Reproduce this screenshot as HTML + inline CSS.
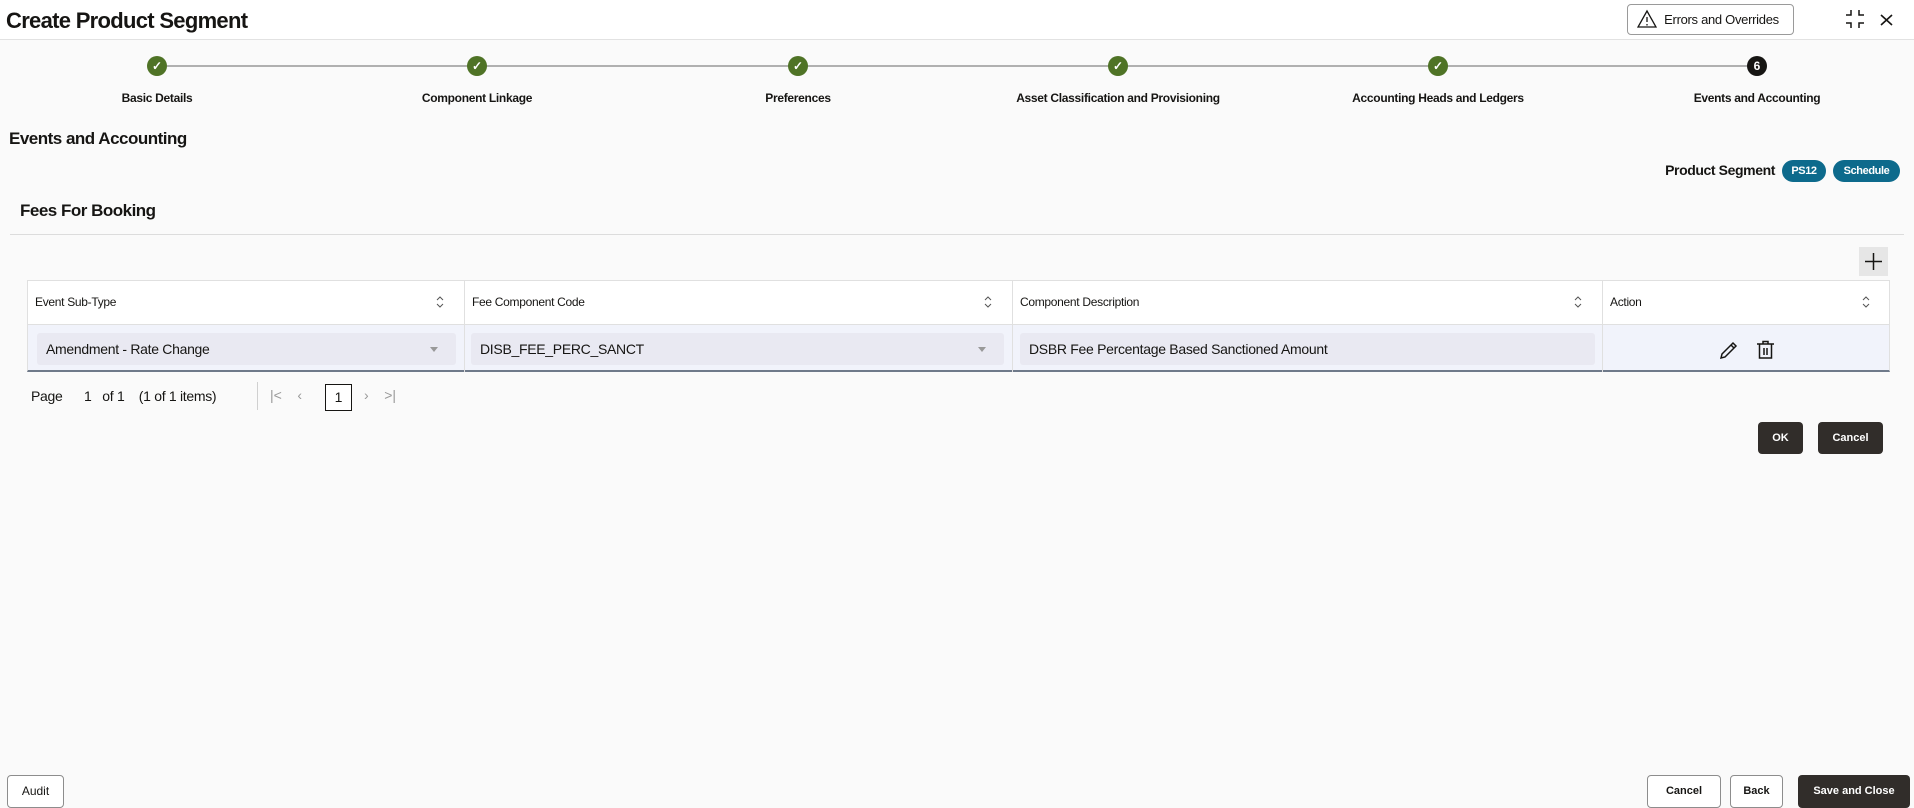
<!DOCTYPE html>
<html><head><meta charset="utf-8"><style>
*{box-sizing:border-box;margin:0;padding:0}
body{width:1914px;height:808px;overflow:hidden;background:#fafafa;font-family:"Liberation Sans",sans-serif;color:#161513;position:relative}
.a{position:absolute}
.hdr{left:0;top:0;width:1914px;height:40px;background:#fff;border-bottom:1px solid #e2e2e2}
.t{font-weight:bold}
.circ{width:20px;height:20px;border-radius:50%;background:#4f7326;color:#fff;font-size:12px;text-align:center;line-height:20px;font-weight:bold}
.lbl{font-size:12px;font-weight:bold;width:320px;text-align:center;top:91px;letter-spacing:-0.3px}
.badge{background:#0d6a8c;color:#fff;font-size:11px;font-weight:bold;height:22px;line-height:22px;border-radius:11px;text-align:center;top:160px;letter-spacing:-0.4px}
.th{font-size:12px;top:280px;height:45px;line-height:45px;padding-left:8px;letter-spacing:-0.3px}
.inp{background:#e9e9f2;border-radius:3px;top:333px;height:32px;line-height:32px;font-size:14px;padding-left:9px;letter-spacing:-0.3px}
.btn{border-radius:4px;font-size:12px;font-weight:bold;text-align:center}
.dk{background:#312d2a;color:#fff}
.lt{background:#fff;border:1px solid #8d8d8d;color:#161513}
</style></head><body>
<div class="a hdr"></div>
<div class="a t" style="left:6px;top:8px;font-size:22px;letter-spacing:-0.7px">Create Product Segment</div>
<div class="a lt btn" style="left:1627px;top:4px;width:167px;height:31px;line-height:29px;font-weight:normal;font-size:13px;padding-left:22px;border-color:#9a9a9a;letter-spacing:-0.3px">Errors and Overrides</div>
<svg class="a" style="left:1637px;top:9px" width="20" height="20" viewBox="0 0 20 20"><path d="M10 2L19 18H1Z" fill="none" stroke="#161513" stroke-width="1.3"/><path d="M10 8v5M10 15v1.5" stroke="#161513" stroke-width="1.3"/></svg>
<svg class="a" style="left:1845px;top:9px" width="20" height="20" viewBox="0 0 20 20" fill="none" stroke="#161513" stroke-width="1.5"><path d="M6 1v5H1M14 1v5h5M6 19v-5H1M14 19v-5h5"/></svg>
<svg class="a" style="left:1880px;top:14px" width="13" height="12" viewBox="0 0 13 12" stroke="#161513" stroke-width="1.6"><path d="M1 1l11 10M12 1L1 11"/></svg>

<div class="a" style="left:167px;top:65px;width:1580px;height:2px;background:#b0b0b0"></div>
<div class="a circ" style="left:147px;top:56px">✓</div>
<div class="a circ" style="left:467px;top:56px">✓</div>
<div class="a circ" style="left:788px;top:56px">✓</div>
<div class="a circ" style="left:1108px;top:56px">✓</div>
<div class="a circ" style="left:1428px;top:56px">✓</div>
<div class="a circ" style="left:1747px;top:56px;background:#161513">6</div>
<div class="a lbl" style="left:-3px">Basic Details</div>
<div class="a lbl" style="left:317px">Component Linkage</div>
<div class="a lbl" style="left:638px">Preferences</div>
<div class="a lbl" style="left:958px">Asset Classification and Provisioning</div>
<div class="a lbl" style="left:1278px">Accounting Heads and Ledgers</div>
<div class="a lbl" style="left:1597px">Events and Accounting</div>

<div class="a t" style="left:9px;top:129px;font-size:17px;letter-spacing:-0.5px">Events and Accounting</div>
<div class="a t" style="left:1575px;top:162px;font-size:14px;width:200px;text-align:right;letter-spacing:-0.4px;white-space:nowrap">Product Segment</div>
<div class="a badge" style="left:1782px;width:44px">PS12</div>
<div class="a badge" style="left:1833px;width:67px">Schedule</div>
<div class="a t" style="left:20px;top:201px;font-size:17px;letter-spacing:-0.5px">Fees For Booking</div>
<div class="a" style="left:10px;top:234px;width:1894px;height:1px;background:#dcdcdc"></div>

<div class="a" style="left:1859px;top:247px;width:29px;height:29px;background:#e6e6e6"></div>
<svg class="a" style="left:1864px;top:252px" width="19" height="19" viewBox="0 0 19 19" stroke="#161513" stroke-width="1.5"><path d="M9.5 1v17M1 9.5h17"/></svg>

<div class="a" style="left:27px;top:280px;width:1863px;height:45px;background:#fff;border:1px solid #e0e0e0"></div>
<div class="a" style="left:27px;top:325px;width:1863px;height:47px;background:#f1f3fb;border-bottom:2px solid #6f7a8a;border-left:1px solid #e0e0e0;border-right:1px solid #e0e0e0"></div>
<div class="a" style="left:464px;top:280px;width:1px;height:92px;background:#e0e0e0"></div>
<div class="a" style="left:1012px;top:280px;width:1px;height:92px;background:#e0e0e0"></div>
<div class="a" style="left:1602px;top:280px;width:1px;height:92px;background:#e0e0e0"></div>
<div class="a th" style="left:27px">Event Sub-Type</div>
<div class="a th" style="left:464px">Fee Component Code</div>
<div class="a th" style="left:1012px">Component Description</div>
<div class="a th" style="left:1602px">Action</div>
<svg class="a" style="left:436px;top:296px" width="8" height="12" viewBox="0 0 8 12" fill="none" stroke="#555" stroke-width="1"><path d="M1 4l3-3 3 3M1 8l3 3 3-3"/></svg>
<svg class="a" style="left:984px;top:296px" width="8" height="12" viewBox="0 0 8 12" fill="none" stroke="#555" stroke-width="1"><path d="M1 4l3-3 3 3M1 8l3 3 3-3"/></svg>
<svg class="a" style="left:1574px;top:296px" width="8" height="12" viewBox="0 0 8 12" fill="none" stroke="#555" stroke-width="1"><path d="M1 4l3-3 3 3M1 8l3 3 3-3"/></svg>
<svg class="a" style="left:1862px;top:296px" width="8" height="12" viewBox="0 0 8 12" fill="none" stroke="#555" stroke-width="1"><path d="M1 4l3-3 3 3M1 8l3 3 3-3"/></svg>

<div class="a inp" style="left:37px;width:419px">Amendment - Rate Change</div>
<div class="a inp" style="left:471px;width:533px">DISB_FEE_PERC_SANCT</div>
<div class="a inp" style="left:1020px;width:575px">DSBR Fee Percentage Based Sanctioned Amount</div>
<div class="a" style="left:430px;top:347px;border-left:4px solid transparent;border-right:4px solid transparent;border-top:5px solid #999"></div>
<div class="a" style="left:978px;top:347px;border-left:4px solid transparent;border-right:4px solid transparent;border-top:5px solid #999"></div>
<svg class="a" style="left:1719px;top:340px" width="20" height="20" viewBox="0 0 20 20" fill="none" stroke="#161513" stroke-width="1.5"><path d="M2 18l1-4L14 3l3 3L6 17zM12 5l3 3"/></svg>
<svg class="a" style="left:1756px;top:340px" width="19" height="19" viewBox="0 0 19 19" fill="none" stroke="#161513" stroke-width="1.5"><path d="M1 4h17M7 4V1.5h5V4M3.5 4v14h12V4M8 8v7M11 8v7"/></svg>

<div class="a" style="left:31px;top:388px;font-size:14px;letter-spacing:-0.3px">Page&nbsp;&nbsp;&nbsp;&nbsp;&nbsp;&nbsp;1&nbsp;&nbsp;&nbsp;of 1&nbsp;&nbsp;&nbsp;&nbsp;(1 of 1 items)</div>
<div class="a" style="left:257px;top:382px;width:1px;height:28px;background:#d0d0d0"></div>
<div class="a" style="left:270px;top:387px;font-size:14px;color:#999">|&lt;&nbsp;&nbsp;&nbsp;&nbsp;&lsaquo;</div>
<div class="a" style="left:325px;top:384px;width:27px;height:27px;border:1px solid #161513;font-size:14px;text-align:center;line-height:25px;background:#fff">1</div>
<div class="a" style="left:364px;top:387px;font-size:14px;color:#999">&rsaquo;&nbsp;&nbsp;&nbsp;&nbsp;&gt;|</div>

<div class="a btn dk" style="left:1758px;top:422px;width:45px;height:32px;line-height:32px;font-size:11px">OK</div>
<div class="a btn dk" style="left:1818px;top:422px;width:65px;height:32px;line-height:32px;font-size:11px">Cancel</div>

<div class="a btn lt" style="left:7px;top:775px;width:57px;height:33px;line-height:31px;font-weight:normal;font-size:12px">Audit</div>
<div class="a btn lt" style="left:1647px;top:775px;width:74px;height:33px;line-height:31px;font-size:11px">Cancel</div>
<div class="a btn lt" style="left:1730px;top:775px;width:53px;height:33px;line-height:31px;font-size:11px">Back</div>
<div class="a btn dk" style="left:1798px;top:775px;width:112px;height:33px;line-height:33px;font-size:11px">Save and Close</div>
</body></html>
